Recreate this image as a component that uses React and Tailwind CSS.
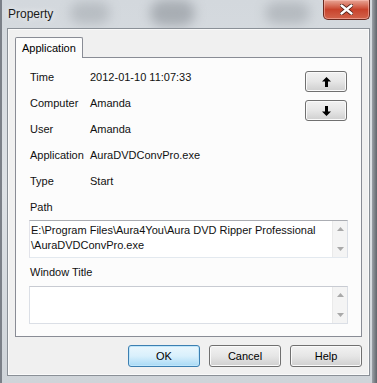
import React from 'react'

const font = { fontFamily: '"Liberation Sans", Arial, sans-serif' }

function Arrow({ down }) {
  return (
    <svg width="9" height="10" viewBox="0 0 9 10" className={down ? 'rotate-180' : ''}>
      <path d="M4.5 0 L9 4.5 L6 4.5 L6 10 L3 10 L3 4.5 L0 4.5 Z" fill="#000" />
    </svg>
  )
}

function ScrollArrows() {
  return (
    <div className="w-[15px] flex flex-col justify-between items-center py-[6px] bg-[#f4f4f4] border-l border-[#eaeaea]">
      <svg width="7" height="4" viewBox="0 0 7 4"><path d="M0 4 L3.5 0 L7 4 Z" fill="#a9a9a9" /></svg>
      <svg width="7" height="4" viewBox="0 0 7 4"><path d="M0 0 L3.5 4 L7 0 Z" fill="#a9a9a9" /></svg>
    </div>
  )
}

function WinButton({ children, primary, className = '' }) {
  return (
    <button
      className={
        'h-[22px] w-[72px] rounded-[3px] border text-[11px] text-black flex items-center justify-center ' +
        (primary
          ? 'border-[#3c7fb1] bg-gradient-to-b from-[#eaf6fd] via-[#d9f0fc] to-[#a7d9f5] shadow-[inset_0_0_0_1px_#bfe6fb] '
          : 'border-[#707070] bg-gradient-to-b from-[#f2f2f2] via-[#e6e6e6] to-[#cfcfcf] shadow-[inset_0_0_0_1px_#fafafa] ') +
        className
      }
    >
      {children}
    </button>
  )
}

export default function App() {
  const rows = [
    ['Time', '2012-01-10 11:07:33'],
    ['Computer', 'Amanda'],
    ['User', 'Amanda'],
    ['Application', 'AuraDVDConvPro.exe'],
    ['Type', 'Start'],
  ]

  return (
    <div style={font} className="w-[377px] h-[383px] relative overflow-hidden bg-gradient-to-b from-[#d3d8dd] via-[#dde1e5] to-[#cfd4d9] text-black">
      {/* glass blur behind title */}
      <div className="absolute left-[70px] top-[2px] w-[40px] h-[22px] rounded-full bg-[#8e949a] opacity-40 blur-[6px]" />
      <div className="absolute left-[150px] top-[0px] w-[45px] h-[26px] rounded-full bg-[#7d838a] opacity-50 blur-[6px]" />
      <div className="absolute left-[265px] top-[2px] w-[45px] h-[22px] rounded-full bg-[#878d93] opacity-40 blur-[6px]" />
      <div className="absolute left-0 top-0 bottom-0 w-[2px] bg-[#7b8088]" />
      <div className="absolute right-0 top-0 bottom-0 w-[5px] bg-gradient-to-r from-[#9da2a8] to-[#60656b]" />

      {/* close button */}
      <div className="absolute right-[7px] top-0 w-[47px] h-[20px] rounded-b-[5px] border border-t-0 border-[#6b2a20] bg-gradient-to-b from-[#e7a596] via-[#c8432c] to-[#d2634b] flex items-center justify-center shadow-[inset_0_0_0_1px_rgba(255,200,190,0.5)]">
        <svg width="13" height="11" viewBox="0 0 13 11">
          <path d="M1 1 L12 10 M12 1 L1 10" stroke="#4a1a12" strokeWidth="4" strokeLinecap="round" />
          <path d="M1.5 1.5 L11.5 9.5 M11.5 1.5 L1.5 9.5" stroke="#fff" strokeWidth="2.4" strokeLinecap="round" />
        </svg>
      </div>

      <div className="relative flex flex-col h-full pl-[7px] pr-[7px] pb-[7px]">
        <div className="h-[28px] flex items-center pl-[1px] text-[12px] text-[#1a1a1a] [text-shadow:0_0_6px_#fff]">Property</div>

        <div className="flex-1 border border-[#8a9097] bg-[#f0f0f0] shadow-[inset_0_0_0_1px_#fafafa] px-[7px] pt-[8px] flex flex-col">
          {/* tab */}
          <div className="flex">
            <div className="h-[21px] w-[68px] border border-b-0 border-[#898c95] bg-[#fcfcfc] rounded-t-[2px] flex items-center pl-[6px] text-[11px] relative z-10 -mb-px">
              Application
            </div>
          </div>

          <div className="h-[280px] border border-[#898c95] bg-[#fcfcfc] px-[13px] pt-[6px] flex flex-col text-[11px] text-[#111]">
            <div className="flex">
              <div className="flex-1 flex flex-col pl-[1px]">
                {rows.map(([k, v]) => (
                  <div key={k} className="h-[26px] flex items-center">
                    <span className="w-[60px]">{k}</span>
                    <span>{v}</span>
                  </div>
                ))}
              </div>
              <div className="flex flex-col gap-[8px] mt-[7px] mr-px">
                <WinButton className="!w-[42px] !h-[21px]"><Arrow /></WinButton>
                <WinButton className="!w-[42px] !h-[21px]"><Arrow down /></WinButton>
              </div>
            </div>

            <div className="h-[26px] flex items-center pl-[1px]">Path</div>
            <div className="h-[38px] flex bg-white border border-[#abadb3] border-l-[#e2e3ea] border-b-[#e3e9ef] border-r-[#dbdfe6]">
              <div className="flex-1 pl-[1px] pt-[2px] leading-[15px]">
                E:\Program Files\Aura4You\Aura DVD Ripper Professional
                <br />
                \AuraDVDConvPro.exe
              </div>
              <ScrollArrows />
            </div>

            <div className="h-[28px] flex items-center pl-[1px]">Window Title</div>
            <div className="h-[38px] flex bg-white border border-[#dbdfe6] border-t-[#c8cbd2]">
              <div className="flex-1" />
              <ScrollArrows />
            </div>
          </div>

          <div className="flex justify-end gap-[9px] pt-[8px]">
            <WinButton primary>OK</WinButton>
            <WinButton>Cancel</WinButton>
            <WinButton>Help</WinButton>
          </div>
        </div>
      </div>
    </div>
  )
}
